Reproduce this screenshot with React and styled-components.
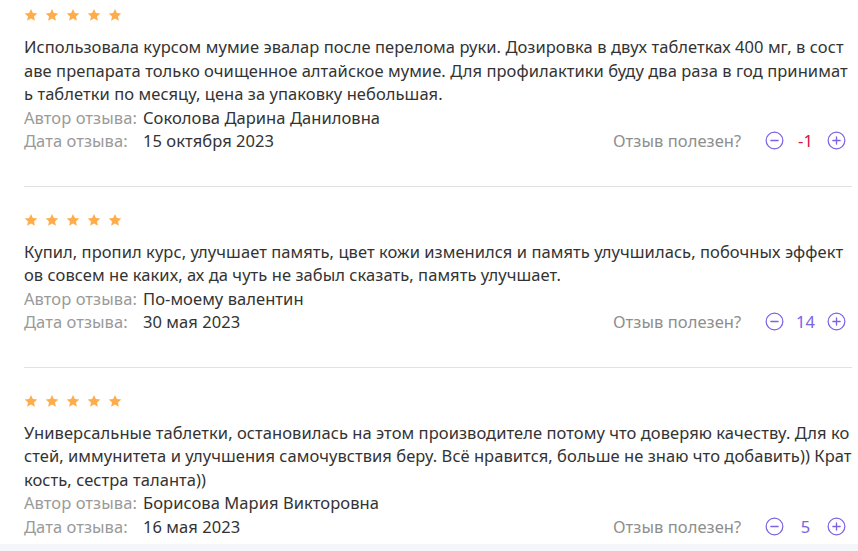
import React from 'react';
import styled, { createGlobalStyle } from 'styled-components';

const GlobalStyle = createGlobalStyle`
    html, body {
        margin: 0;
        padding: 0;
        background: #fff;
    }
    body {
        font-family: "Noto Sans", "Open Sans", sans-serif;
        font-size: 16.5px;
        letter-spacing: 0.06px;
        color: #333;
    }
`;

const reviews = [
    {
        text: 'Использовала курсом мумие эвалар после перелома руки. Дозировка в двух таблетках 400 мг, в составе препарата только очищенное алтайское мумие. Для профилактики буду два раза в год принимать таблетки по месяцу, цена за упаковку небольшая.',
        author: 'Соколова Дарина Даниловна',
        date: '15 октября 2023',
        votes: -1,
    },
    {
        text: 'Купил, пропил курс, улучшает память, цвет кожи изменился и память улучшилась, побочных эффектов совсем не каких, ах да чуть не забыл сказать, память улучшает.',
        author: 'По-моему валентин',
        date: '30 мая 2023',
        votes: 14,
    },
    {
        text: 'Универсальные таблетки, остановилась на этом производителе потому что доверяю качеству. Для костей, иммунитета и улучшения самочувствия беру. Всё нравится, больше не знаю что добавить)) Краткость, сестра таланта))',
        author: 'Борисова Мария Викторовна',
        date: '16 мая 2023',
        votes: 5,
    },
];

const Star = () => (
    <svg width="14" height="14" viewBox="0 0 24 24">
        <path
            d="M12 1.5l3.2 7 7.6.8-5.7 5.1 1.6 7.5L12 18l-6.7 3.9 1.6-7.5L1.2 9.3l7.6-.8z"
            fill="#ffac4a"
        />
    </svg>
);

const VoteIcon = ({ plus }) => (
    <svg width="19" height="19" viewBox="0 0 20 20">
        <circle cx="10" cy="10" r="8.8" fill="none" stroke="#7d62e4" strokeWidth="1.3" />
        <path d="M6.2 10h7.6" stroke="#7d62e4" strokeWidth="1.4" strokeLinecap="round" />
        {plus && <path d="M10 6.2v7.6" stroke="#7d62e4" strokeWidth="1.4" strokeLinecap="round" />}
    </svg>
);

const App = () => {
    return (
        <>
            <GlobalStyle />
            <Page>
                <List>
                    {reviews.map((r, i) => (
                        <Review key={i} $first={i === 0} $last={i === reviews.length - 1}>
                            <Stars>
                                {[0, 1, 2, 3, 4].map((s) => <Star key={s} />)}
                            </Stars>
                            <Text>{r.text}</Text>
                            <Meta>
                                <Label>Автор отзыва:</Label>
                                {r.author}
                            </Meta>
                            <DateRow>
                                <Meta>
                                    <Label>Дата отзыва:</Label>
                                    {r.date}
                                </Meta>
                                <Vote>
                                    <VoteLabel>Отзыв полезен?</VoteLabel>
                                    <VoteButton><VoteIcon /></VoteButton>
                                    <Count $negative={r.votes < 0}>{r.votes}</Count>
                                    <VoteButton><VoteIcon plus /></VoteButton>
                                </Vote>
                            </DateRow>
                        </Review>
                    ))}
                </List>
                <Footer />
            </Page>
        </>
    );
};

export default App;

const Page = styled.div`
    width: 858px;
    height: 551px;
    overflow: hidden;
    display: flex;
    flex-direction: column;
`;

const List = styled.div`
    padding: 0 6px 0 24px;
`;

const Review = styled.div`
    padding: ${(p) => (p.$first ? '8px' : '26px')} 0 ${(p) => (p.$last ? '6px' : '33px')};
    border-bottom: ${(p) => (p.$last ? 'none' : '1px solid #e2e2e2')};
`;

const Stars = styled.div`
    display: flex;
    gap: 7px;
    height: 14px;
    margin-bottom: 13px;

    svg {
        display: block;
    }
`;

const Text = styled.p`
    margin: 0;
    line-height: 23.5px;
    color: #333;
    word-break: break-all;
`;

const Meta = styled.div`
    line-height: 23.5px;
    color: #333;
`;

const Label = styled.span`
    display: inline-block;
    width: 119px;
    color: #9a9a9a;
`;

const DateRow = styled.div`
    display: flex;
    justify-content: space-between;
    align-items: center;
    padding-right: 6px;
`;

const Vote = styled.div`
    display: flex;
    align-items: center;
    width: 233px;
`;

const VoteLabel = styled.span`
    color: #8e8e8e;
    margin-right: auto;
`;

const VoteButton = styled.span`
    display: flex;
    width: 19px;
    height: 19px;
    cursor: pointer;
`;

const Count = styled.span`
    min-width: 43px;
    text-align: center;
    color: ${(p) => (p.$negative ? '#d6123c' : '#7d62e4')};
`;

const Footer = styled.div`
    flex: 1;
    background: #f5f6f9;
`;
